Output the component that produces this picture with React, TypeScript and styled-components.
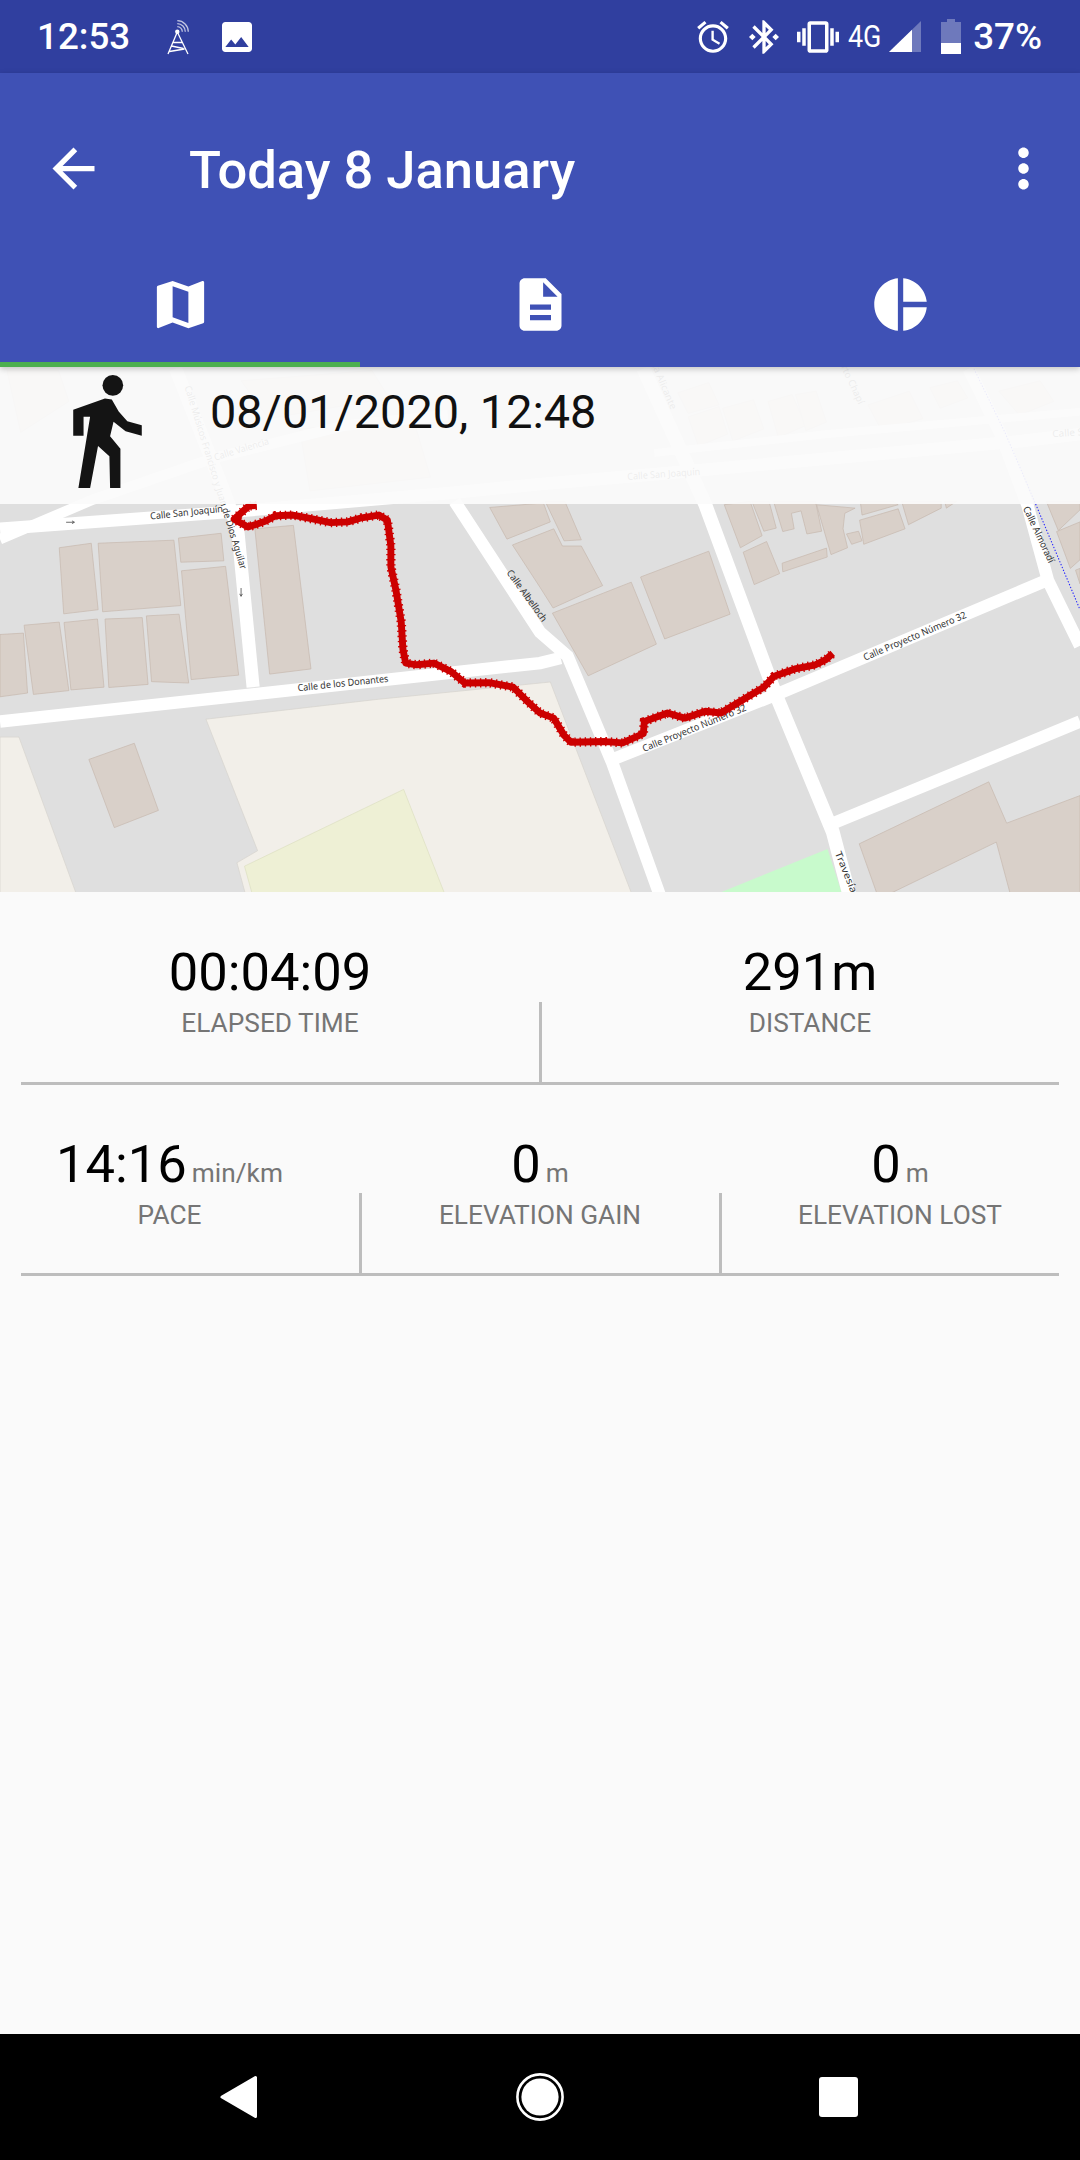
import React from 'react'
import styled, { createGlobalStyle } from 'styled-components'

const GlobalStyle = createGlobalStyle`
  html, body {
    margin: 0;
    padding: 0;
    background: #fafafa;
    font-family: Roboto, "Liberation Sans", sans-serif;
  }
`

const Page = styled.div`
  width: 1080px;
  height: 2160px;
  display: flex;
  flex-direction: column;
  overflow: hidden;
  background: #fafafa;
`

const StatusBar = styled.div`
  height: 73px;
  flex: none;
  display: flex;
  align-items: center;
  padding: 0 38px 0 37px;
  background: #303f9f;
  color: #fff;
`

const StatusText = styled.span<{ $ml?: number }>`
  margin-left: ${(p) => p.$ml ?? 0}px;
  font-size: 36.75px;
  font-weight: 500;
  line-height: 73px;
`

const StatusSpacer = styled.div`
  flex: 1;
`

const NetworkLabel = styled.span`
  width: 34px;
  margin-left: 9px;
  font-size: 32px;
  line-height: 73px;
  transform: scaleX(0.84);
  transform-origin: left center;
  white-space: nowrap;
`

const StatusIcon = styled.svg<{ $ml?: number }>`
  flex: none;
  display: block;
  margin-left: ${(p) => p.$ml ?? 0}px;
  fill: #fff;
`

const AppBar = styled.header`
  position: relative;
  z-index: 2;
  flex: none;
  background: #3f51b5;
  box-shadow: 0 2px 6px rgba(0, 0, 0, 0.22);
`

const Toolbar = styled.div`
  height: 168px;
  box-sizing: border-box;
  padding: 22px 25px 0 42px;
  display: flex;
  align-items: center;
  color: #fff;
`

const Title = styled.h1`
  flex: 1;
  margin: 4px 0 0 84px;
  font-size: 52.5px;
  font-weight: 500;
  line-height: 64px;
`

const Tabs = styled.nav`
  height: 126px;
  display: grid;
  grid-template-columns: repeat(3, 1fr);
`

const Tab = styled.div<{ $active?: boolean }>`
  display: flex;
  align-items: center;
  justify-content: center;
  box-shadow: ${(p) => (p.$active ? 'inset 0 -5px 0 #4caf50' : 'none')};
`

const MapPanel = styled.section`
  position: relative;
  flex: none;
  height: 525px;
  overflow: hidden;
  background: #dfdfdf;
`

const MapCanvas = styled.svg`
  display: block;
  width: 1080px;
  height: 525px;
`

const MapHeader = styled.div`
  position: absolute;
  top: 0;
  left: 0;
  right: 0;
  height: 137px;
  box-sizing: border-box;
  padding: 8px 0 0 73px;
  display: flex;
  align-items: flex-start;
  background: rgba(251, 251, 251, 0.93);
`

const ActivityDate = styled.div`
  margin: 7px 0 0 68px;
  font-size: 46.8px;
  line-height: 60px;
  color: #111;
`

const StatRow = styled.div<{ $columns: number }>`
  flex: none;
  display: grid;
  grid-template-columns: repeat(${(p) => p.$columns}, 1fr);
`

const Stat = styled.div<{ $inset?: number }>`
  padding-right: ${(p) => p.$inset ?? 0}px;
  text-align: center;
`

const StatValue = styled.div<{ $top: number }>`
  margin-top: ${(p) => p.$top}px;
  font-size: 52.5px;
  line-height: 60px;
  color: #000;
  white-space: nowrap;
`

const StatUnit = styled.span`
  margin-left: 5px;
  font-size: 26.25px;
  line-height: 1;
  color: #757575;
`

const LabelSlot = styled.div<{ $height: number }>`
  height: ${(p) => p.$height}px;
  margin-top: 1px;
  box-sizing: border-box;
  padding-top: 4px;
`

const StatCell = styled.div<{ $divided?: boolean }>`
  position: relative;
  &::before {
    content: '';
    display: ${(p) => (p.$divided ? 'block' : 'none')};
    position: absolute;
    left: -1px;
    bottom: 0;
    width: 3px;
    height: 80px;
    background: #bdbdbd;
  }
`

const StatLabel = styled.div`
  font-size: 26.25px;
  line-height: 32px;
  color: #757575;
`

const Rule = styled.hr`
  flex: none;
  height: 3px;
  margin: 0 21px;
  border: 0;
  background: #bdbdbd;
`

const Filler = styled.div`
  flex: 1;
`

const NavBar = styled.footer`
  height: 126px;
  flex: none;
  display: flex;
  align-items: center;
  justify-content: center;
  gap: 242px;
  background: #000;
`

const NavIcon = styled.svg`
  display: block;
  width: 60px;
  height: 60px;
  fill: #fff;
`

const Glyph = styled.svg<{ $size: number }>`
  flex: none;
  display: block;
  width: ${(p) => p.$size}px;
  height: ${(p) => p.$size}px;
  fill: #fff;
`

const paths = {
  back: 'M20 11H7.83l5.59-5.59L12 4l-8 8 8 8 1.41-1.41L7.83 13H20v-2z',
  more: 'M12 8c1.1 0 2-.9 2-2s-.9-2-2-2-2 .9-2 2 .9 2 2 2zm0 2c-1.1 0-2 .9-2 2s.9 2 2 2 2-.9 2-2-.9-2-2-2zm0 6c-1.1 0-2 .9-2 2s.9 2 2 2 2-.9 2-2-.9-2-2-2z',
  map: 'M20.5 3l-.16.03L15 5.1 9 3 3.36 4.9c-.21.07-.36.25-.36.48V20.5c0 .28.22.5.5.5l.16-.03L9 18.9l6 2.1 5.64-1.9c.21-.07.36-.25.36-.48V3.5c0-.28-.22-.5-.5-.5zM15 19l-6-2.11V5l6 2.11V19z',
  doc: 'M14 2H6c-1.1 0-1.99.9-1.99 2L4 20c0 1.1.89 2 1.99 2H18c1.1 0 2-.9 2-2V8l-6-6zm2 16H8v-2h8v2zm0-4H8v-2h8v2zm-3-5V3.5L18.5 9H13z',
  pie: 'M11 2v20c-5.07-.5-9-4.79-9-10s3.93-9.5 9-10zm2.03 0v8.99H22c-.47-4.74-4.24-8.52-8.97-8.99zm0 11.01V22c4.74-.47 8.5-4.25 8.97-8.99h-8.97z',
  image: 'M21 19V5c0-1.1-.9-2-2-2H5c-1.1 0-2 .9-2 2v14c0 1.1.9 2 2 2h14c1.1 0 2-.9 2-2zM8.5 13.5l2.5 3.01L14.5 12l4.5 6H5l3.5-4.5z',
  alarm: 'M22 5.72l-4.6-3.86-1.29 1.53 4.6 3.86L22 5.72zM7.88 3.39L6.6 1.86 2 5.71l1.29 1.53 4.59-3.85zM12.5 8H11v6l4.75 2.85.75-1.23-4-2.37V8zM12 4c-4.97 0-9 4.03-9 9s4.03 9 9 9 9-4.03 9-9-4.03-9-9-9zm0 16c-3.87 0-7-3.13-7-7s3.13-7 7-7 7 3.13 7 7-3.13 7-7 7z',
  bluetooth: 'M7 12l-2-2-2 2 2 2 2-2zm10.71-4.29L12 2h-1v7.59L6.41 5 5 6.41 10.59 12 5 17.59 6.41 19 11 14.41V22h1l5.71-5.71-4.3-4.29 4.3-4.29zM13 5.83l1.88 1.88L13 9.59V5.83zm1.88 10.46L13 18.17v-3.76l1.88 1.88zM19 10l-2 2 2 2 2-2-2-2z',
  vibrate: 'M0 15h2V9H0v6zm3 2h2V7H3v10zm19-8v6h2V9h-2zm-3 8h2V7h-2v10zM16.5 3h-9C6.67 3 6 3.67 6 4.5v15c0 .83.67 1.5 1.5 1.5h9c.83 0 1.5-.67 1.5-1.5v-15c0-.83-.67-1.5-1.5-1.5zM16 19H8V5h8v14z',
}

// map coordinates are in crop units: 2.904 per screen pixel, right half starts at x = 1568
const roads = [
  { pts: '0,490 680,440 1318,385 1568,360 1918,330 2968,235 3136,215', w: 36 },
  { pts: '0,520 270,405 620,285 1000,190 1300,160', w: 30 },
  { pts: '510,25 650,380 690,490 735,950', w: 38 },
  { pts: '0,1050 740,970 1568,880 1628,865', w: 36 },
  { pts: '1320,410 1568,790 1648,860 1778,1170 1918,1560', w: 36 },
  { pts: '1778,1160 2258,970 3038,640', w: 36 },
  { pts: '1868,25 2048,420 2248,960 2418,1370 2468,1560', w: 40 },
  { pts: '2408,1350 3136,1050', w: 36 },
  { pts: '2813,25 2908,220 2983,420 3043,640 3136,830', w: 36 },
  { pts: '1900,270 2400,215 2908,170 3136,150', w: 22 },
]

const buildings = [
  '172,545 265,532 285,725 185,737',
  '285,532 505,523 525,713 298,731',
  '518,517 642,503 650,583 525,587',
  '527,612 655,599 693,915 555,928',
  '0,797 68,793 80,967 0,978',
  '70,770 172,761 200,960 97,971',
  '186,762 283,752 302,950 206,958',
  '305,752 413,748 430,942 316,951',
  '425,743 520,738 548,938 440,934',
  '740,490 852,480 903,897 783,912',
  '1422,428 1578,415 1598,470 1472,520',
  '1488,537 1608,490 1633,540 1688,540 1750,655 1606,720 1568,660',
  '1583,410 1640,410 1688,522 1638,525',
  '1604,735 1833,645 1906,825 1708,917',
  '1860,630 2058,555 2120,738 1930,810',
  '2103,420 2178,410 2213,510 2150,545',
  '2183,410 2233,410 2254,488 2218,497',
  '2246,410 2368,410 2386,497 2343,505 2326,438 2298,445 2306,490 2273,498',
  '2371,420 2483,430 2453,445 2448,490 2461,545 2413,565',
  '2458,505 2493,497 2503,525 2473,535',
  '2496,465 2608,432 2628,490 2508,535',
  '2498,410 2593,410 2608,420 2503,450',
  '2618,410 2733,410 2733,430 2638,478',
  '2743,410 2778,410 2748,430',
  '2158,558 2226,527 2264,620 2190,652',
  '2271,590 2400,546 2402,572 2273,615',
  '3038,410 3136,410 3136,435 3073,495',
  '3068,498 3136,470 3136,580 3108,605',
  '3123,610 3136,605 3136,650',
  '2495,1405 2871,1225 2923,1345 3136,1265 3136,1560 2936,1560 2893,1400 2563,1560 2550,1560',
  '258,1160 390,1113 460,1308 332,1358',
  // under the translucent header
  '20,30 170,30 200,120 60,210',
  '700,60 1080,30 1130,110 780,170',
  '870,200 1200,170 1250,340 900,380',
  '1968,95 2058,65 2088,130 1998,155',
  '1998,165 2088,135 2113,215 2028,250',
  '2098,140 2188,115 2218,200 2128,235',
  '2230,120 2300,100 2340,190 2260,225',
  '2310,100 2370,90 2400,180 2340,205',
  '2520,130 2640,90 2680,170 2560,205',
  '2700,80 2780,60 2810,110 2730,140',
  '2900,90 3020,60 3060,120 2960,160',
]

const creamAreas = [
  '598,1043 1100,985 1598,935 1838,1560 715,1560 688,1460 748,1425',
  '0,1095 55,1095 225,1560 0,1560',
]

const routePoints =
  '745,422 722,424 680,462 720,485 770,468 800,452 850,450 900,460 960,472 1010,470 1050,458 1100,450 1125,465 1135,540 1135,600 1150,670 1165,760 1170,840 1178,880 1210,885 1260,880 1310,905 1350,938 1420,937 1490,950 1530,990 1568,1025 1608,1040 1638,1090 1658,1110 1758,1108 1808,1112 1868,1085 1871,1050 1938,1025 1988,1040 2048,1020 2093,1025 2168,980 2218,950 2248,918 2308,897 2368,885 2398,870 2418,852'

const mapLabels = [
  { text: 'Calle Músicos Francisco y Juan de Dios Aguilar', x: 536, y: 78, rot: 73, len: 555 },
  { text: 'Calle Valencia', x: 625, y: 292, rot: -17, len: 165 },
  { text: 'Calle San Joaquín', x: 437, y: 463, rot: -6, len: 212 },
  { text: 'Calle de los Donantes', x: 865, y: 962, rot: -6, len: 265 },
  { text: 'Calle Albelloch', x: 1470, y: 618, rot: 54, len: 178 },
  { text: 'Calle San Joaquín', x: 1822, y: 348, rot: -4, len: 212 },
  { text: 'Calle Proyecto Número 32', x: 1870, y: 1138, rot: -22, len: 322 },
  { text: 'Calle Proyecto Número 32', x: 2512, y: 873, rot: -23, len: 322 },
  { text: 'Travesía Alicante', x: 2424, y: 1432, rot: 68, len: 260 },
  { text: 'Travesía Alicante', x: 1860, y: -62, rot: 67, len: 225 },
  { text: 'Calle Almoradí', x: 2970, y: 430, rot: 65, len: 178 },
  { text: 'Ruperto Chapí', x: 2413, y: -42, rot: 65, len: 190 },
  { text: 'Calle S', x: 3056, y: 224, rot: -4, len: 90 },
]

function TrackMap() {
  return (
    <MapCanvas viewBox="0 20 3136 1525" preserveAspectRatio="none">
      <rect x="0" y="0" width="3136" height="1600" fill="#dfdfdf" />
      {creamAreas.map((pts) => (
        <polygon key={pts} points={pts} fill="#f2efe9" stroke="#d6d3cd" strokeWidth="2" />
      ))}
      <polygon points="710,1470 1172,1247 1295,1560 735,1560" fill="#eef0d5" stroke="#dcdfc0" strokeWidth="2" />
      <polygon points="2058,1560 2403,1420 2448,1560" fill="#c8facc" />
      {buildings.map((pts) => (
        <polygon key={pts} points={pts} fill="#d9d0c9" stroke="#c6b8ad" strokeWidth="2" />
      ))}
      {roads.map((road) => (
        <polyline key={road.pts} points={road.pts} fill="none" stroke="#fff" strokeWidth={road.w} />
      ))}
      <polyline
        points="2828,25 2918,210 3008,420 3136,725"
        fill="none"
        stroke="#2020ff"
        strokeWidth="3"
        strokeDasharray="4 5"
      />
      <path d="M192 471h24m-7-4l7 4-7 4M700 662v24m-4-7l4 7 4-7" fill="none" stroke="#555" strokeWidth="2.5" />
      <g fontFamily='"Noto Sans", sans-serif' fontSize="28" fill="#333">
        {mapLabels.map((label) => (
          <text
            key={label.text + label.x}
            x={label.x}
            y={label.y}
            textLength={label.len}
            lengthAdjust="spacingAndGlyphs"
            transform={`rotate(${label.rot} ${label.x} ${label.y})`}
          >
            {label.text}
          </text>
        ))}
      </g>
      <polyline points={routePoints} fill="none" stroke="#cc0000" strokeWidth="20" strokeLinejoin="round" />
      <polyline points={routePoints} fill="none" stroke="#cc0000" strokeWidth="27" strokeDasharray="4 11" />
    </MapCanvas>
  )
}

function WalkerIcon() {
  return (
    <svg width="69" height="113" viewBox="213 44 199 328" fill="#141414">
      <circle cx="328" cy="74" r="30" />
      <polygon points="213,145 305,112 325,115 345,150 370,178 412,190 412,220 365,207 330,180 320,222 350,258 350,372 320,372 318,280 285,250 262,372 228,372 262,165 243,165 243,220 213,220" />
    </svg>
  )
}

function Tower() {
  return (
    <StatusIcon $ml={37} width="23" height="36" viewBox="0 0 23 36">
      <g fill="none" stroke="#fff" strokeWidth="1.3">
        <path d="M10.3 13L1 35M10.3 13L21 35M6 23.5h9M4.5 27l12 2.5M17.5 30L2.5 32.5" />
        <path d="M10.3 7.7A5 5 0 0 1 15.3 12.7M10.3 4.7A8 8 0 0 1 18.3 12.7M10.3 1.7A11 11 0 0 1 21.3 12.7" opacity="0.7" />
      </g>
      <circle cx="10.3" cy="12.7" r="2.2" />
    </StatusIcon>
  )
}

function StatBlock(props: {
  value: string
  unit?: string
  label: string
  top: number
  slot: number
  divided?: boolean
  inset?: number
}) {
  return (
    <StatCell $divided={props.divided}>
      <Stat $inset={props.inset}>
        <StatValue $top={props.top}>
          {props.value}
          {props.unit && <StatUnit>{props.unit}</StatUnit>}
        </StatValue>
        <LabelSlot $height={props.slot}>
          <StatLabel>{props.label}</StatLabel>
        </LabelSlot>
      </Stat>
    </StatCell>
  )
}

export default function App() {
  return (
    <Page>
      <GlobalStyle />
      <StatusBar>
        <StatusText>12:53</StatusText>
        <Tower />
        <StatusIcon $ml={27} width="40" height="40" viewBox="0 0 24 24">
          <path d={paths.image} />
        </StatusIcon>
        <StatusSpacer />
        <StatusIcon width="38" height="38" viewBox="0 0 24 24">
          <path d={paths.alarm} />
        </StatusIcon>
        <StatusIcon $ml={12} width="40" height="40" viewBox="0 0 24 24">
          <path d={paths.bluetooth} />
        </StatusIcon>
        <StatusIcon $ml={13} width="42" height="42" viewBox="0 0 24 24">
          <path d={paths.vibrate} />
        </StatusIcon>
        <NetworkLabel>4G</NetworkLabel>
        <StatusIcon $ml={7} width="32" height="31" viewBox="0 0 32 31">
          <polygon points="0,31 32,0 32,31" opacity="0.3" />
          <polygon points="0,31 23,8.8 23,31" />
        </StatusIcon>
        <StatusIcon $ml={20} width="20" height="35" viewBox="0 0 20 35">
          <path d="M6 0h8v3h6v24H0V3h6z" opacity="0.3" />
          <rect x="0" y="24" width="20" height="11" />
        </StatusIcon>
        <StatusText $ml={12}>37%</StatusText>
      </StatusBar>

      <AppBar>
        <Toolbar>
          <Glyph $size={63} viewBox="0 0 24 24">
            <path d={paths.back} />
          </Glyph>
          <Title>Today 8 January</Title>
          <Glyph $size={63} viewBox="0 0 24 24">
            <path d={paths.more} />
          </Glyph>
        </Toolbar>
        <Tabs>
          <Tab $active>
            <Glyph $size={63} viewBox="0 0 24 24">
              <path d={paths.map} />
            </Glyph>
          </Tab>
          <Tab>
            <Glyph $size={63} viewBox="0 0 24 24">
              <path d={paths.doc} />
            </Glyph>
          </Tab>
          <Tab>
            <Glyph $size={63} viewBox="0 0 24 24">
              <path d={paths.pie} />
            </Glyph>
          </Tab>
        </Tabs>
      </AppBar>

      <MapPanel>
        <TrackMap />
        <MapHeader>
          <WalkerIcon />
          <ActivityDate>08/01/2020, 12:48</ActivityDate>
        </MapHeader>
      </MapPanel>

      <StatRow $columns={2}>
        <StatBlock value="00:04:09" label="ELAPSED TIME" top={50} slot={79} />
        <StatBlock value="291m" label="DISTANCE" top={50} slot={79} divided />
      </StatRow>
      <Rule />
      <StatRow $columns={3}>
        <StatBlock value="14:16" unit="min/km" label="PACE" top={49} slot={78} inset={21} />
        <StatBlock value="0" unit="m" label="ELEVATION GAIN" top={49} slot={78} divided />
        <StatBlock value="0" unit="m" label="ELEVATION LOST" top={49} slot={78} divided />
      </StatRow>
      <Rule />
      <Filler />

      <NavBar>
        <NavIcon viewBox="0 0 60 60">
          <polygon points="14,30 47.5,10.5 47.5,49.5" stroke="#fff" strokeWidth="3" strokeLinejoin="round" />
        </NavIcon>
        <NavIcon viewBox="0 0 60 60">
          <circle cx="30" cy="30" r="22.6" fill="none" stroke="#fff" strokeWidth="2.6" />
          <circle cx="30" cy="30" r="18.6" />
        </NavIcon>
        <NavIcon viewBox="0 0 60 60">
          <rect x="7" y="10" width="39" height="40" rx="3" />
        </NavIcon>
      </NavBar>
    </Page>
  )
}
